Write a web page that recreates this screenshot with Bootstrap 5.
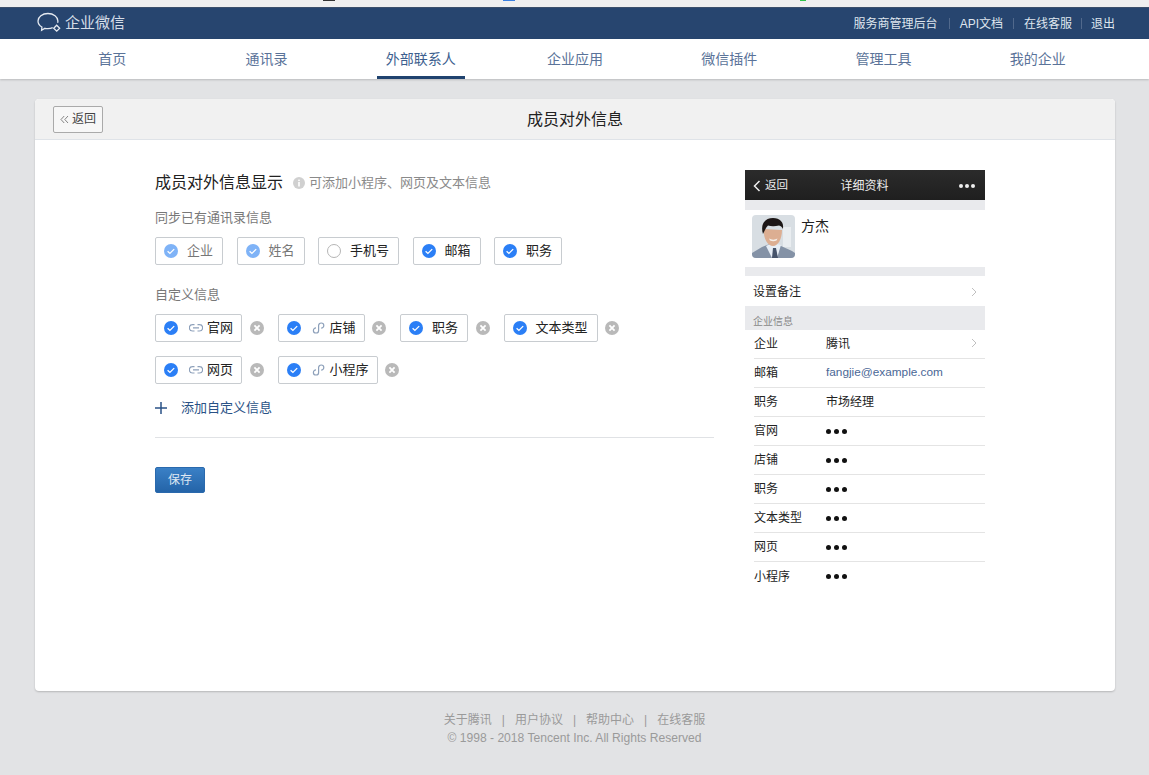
<!DOCTYPE html>
<html lang="zh-CN">
<head>
<meta charset="utf-8">
<title>成员对外信息</title>
<link href="https://cdn.jsdelivr.net/npm/bootstrap@5.3.0/dist/css/bootstrap.min.css" rel="stylesheet">
<style>
html,body{height:775px;overflow:hidden}
body{background:#e2e3e5;font-family:"Liberation Sans","Noto Sans CJK SC",sans-serif;font-size:13px;color:#222}
.browser-strip{height:8px;background:#efefef;border-bottom:1px solid #3b4f6b;position:relative}
.strip-mark{position:absolute;top:0;height:1px}
.mark-a{left:323px;width:12px;background:#333}
.mark-b{left:503px;width:12px;background:#3a7fe0}
.mark-c{left:800px;width:6px;background:#2fc24a}
.top-head{height:31px;background:#27456f;color:#dfe5ee;padding:0 34px 0 36px}
.brand-name{font-size:15px;color:#d5dde8;margin-left:3px}
.top-links a{color:#dfe5ee;text-decoration:none;font-size:12px}
.top-links i{display:block;width:1px;height:11px;background:#51698c;margin:0 10px}
.top-links i:first-of-type{margin-left:11px}
.top-links i:last-of-type{margin:0 9px}
.main-tabs{height:40px;background:#fff;padding:0 34px 0 35px;box-shadow:0 1px 2px rgba(0,0,0,.18)}
.main-tabs .nav-link{flex:1 1 0;text-align:center;padding:0;color:#5a7399;font-size:14px;line-height:41px;height:40px;position:relative}
.main-tabs .nav-link.active{color:#3d5f8f}
.main-tabs .nav-link.active::after{content:"";position:absolute;left:50%;margin-left:-44px;width:88px;height:3px;bottom:0;background:#20436f}
.panel-card{margin:20px 34px 0 35px;height:592px;border:0;border-radius:4px;box-shadow:0 1px 2px rgba(0,0,0,.2);overflow:hidden}
.panel-head{height:41px;background:#f1f1f1;border-bottom:1px solid #dfe3e8;padding:0 18px;position:relative;border-radius:4px 4px 0 0!important}
.panel-title{font-size:16px;color:#222;text-align:center;line-height:41px}
.back-btn{position:absolute;left:18px;top:7px;width:50px;height:27px;padding:0;font-size:12px;line-height:25px;border:1px solid #aaa;border-radius:2px;background:#f7f7f7;color:#444}
.back-btn svg{margin-right:3px;vertical-align:-1px}
.panel-body{padding:30px 130px 0 120px;gap:31px}
.left-col{width:559px}
.sec-title{font-size:16px;color:#222;line-height:26px}
.sec-tip{font-size:13px;color:#8a8a8a;margin-left:10px}
.sec-tip svg{margin-right:4px}
.sub-label{font-size:13px;color:#787878;line-height:18px}
.label-sync{margin-top:13px}
.label-custom{margin-top:21px}
.chip-box{height:28px;border:1px solid #c8ccd0;border-radius:2px;background:#fff;font-size:13px;color:#222;padding:0 9px 0 7px;white-space:nowrap}
.chip-box.soft{color:#777}
.chip-box.has-link{padding-right:8px}
.chip-box svg{flex:none}
.chip-box .lk{margin-left:10px;margin-right:4px}
.chip-box .tx{margin-left:8px}
.chip-box .lk + .tx{margin-left:0}
.row-a{gap:13.5px;margin-top:10px}
.row-b{margin-top:14px}
.row-c{margin-top:10px}
.tick-soft{color:#7fb3f7}
.tick-on{color:#2b7ff6}
.x-gap{margin:0 14px 0 7.5px;flex:none}
.add-link{color:#2a5286;font-size:13px;margin-top:14px;line-height:20px;text-decoration:none}
.add-link svg{margin-right:14px}
.rule-line{border-top:1px solid #e0e2e5;margin:19px 0 29px}
.save-btn{width:50px;height:26px;padding:0;font-size:12px;line-height:24px;color:#dfe8f3;border:1px solid #2a69ad;border-radius:2px;background:linear-gradient(#3a80c6,#2464a8)}
.phone{width:240px;background:#fff;flex:none}
.ph-head{height:30px;background:linear-gradient(#2b2b2b,#1f1f1f);color:#eee;padding:1px 10px 0 8px;font-size:11.5px;position:relative}
.ph-title{position:absolute;left:-1px;right:0;text-align:center;line-height:30px;font-size:12px;color:#eee}
.ph-gap{background:#e9eaed}
.gap-a{height:10px}
.gap-b{height:9px}
.ph-profile{height:57px;padding:5px 7px;gap:6px;font-size:14px;color:#222;line-height:22px}
.ph-row{height:30px;padding:1px 8px 0 8px;font-size:12px;color:#222}
.ph-sect{height:24px;background:#e9eaed;font-size:10px;color:#888;padding:9px 0 0 8px;line-height:14px}
.ph-line{height:29px;margin-left:9px;border-bottom:1px solid #e4e4e4;font-size:12px;color:#222;padding-right:8px}
.ph-line:last-child{border-bottom:0}
.ph-k{width:72px}
.ph-mail{color:#4a6796;font-size:11.8px}
.ph-up{margin-bottom:3px}
.ph-dots{font-size:0}
.ph-dots b{display:block;width:5px;height:5px;border-radius:50%;background:#111;margin-right:3px}
.ph-head .ph-dots b{width:4px;height:4px;background:#eee;margin:0 0 0 2px}
.foot-area{margin-top:20px;font-size:12px;color:#9a9a9a;line-height:18px;text-align:center}
.foot-area span{margin:0 10px}
.foot-copy{font-size:12.1px}
</style>
</head>
<body>
<svg width="0" height="0" class="position-absolute">
<defs>
<symbol id="ck" viewBox="0 0 16 16"><circle cx="8" cy="8" r="7" fill="currentColor"/><path d="M4.600 8.200l2.300 2.200 4.300-4.300" fill="none" stroke="#fff" stroke-width="1.300"/></symbol>
<symbol id="lnk" viewBox="0 0 14 10"><path d="M5.500 1.600H3.600a3 3 0 0 0 0 6.400h1.900M8.500 1.600h1.900a3 3 0 0 1 0 6.400H8.500M4 4.800h6" fill="none" stroke="#8da0ba" stroke-width="1.200"/></symbol>
<symbol id="mini" viewBox="0 0 14 14"><path d="M4 6.800A2.600 2.600 0 1 0 6.600 9.400V4.600A2.600 2.600 0 1 1 9.200 7.200" fill="none" stroke="#8da0ba" stroke-width="1.200"/></symbol>
<symbol id="cl" viewBox="0 0 14 14"><circle cx="7" cy="7" r="7" fill="#b9b9b9"/><path d="M4.400 4.400l5.200 5.200M9.600 4.400l-5.200 5.200" stroke="#fff" stroke-width="1.800"/></symbol>
<symbol id="chev" viewBox="0 0 6 10"><path d="M1 1l4 4-4 4" fill="none" stroke="#c0c0c0" stroke-width="1"/></symbol>
<filter id="soft"><feGaussianBlur stdDeviation=".5"/></filter>
</defs>
</svg>

<div class="browser-strip">
  <div class="strip-mark mark-a"></div>
  <div class="strip-mark mark-b"></div>
  <div class="strip-mark mark-c"></div>
</div>
<header class="top-head d-flex align-items-center justify-content-between">
  <div class="d-flex align-items-center">
    <svg width="26" height="23" viewBox="0 0 26 23"><path d="M21.600 10.800c.2-.6.300-1.200.300-1.900 0-4-4.400-7.400-10-7.400S2 4.900 2 8.900c0 2.500 1.500 4.700 3.900 6.100l-.3 3.300 3.400-2c.9.200 1.900.3 2.900.3 1.700 0 3.400-.3 4.800-.9" fill="none" stroke="#e6ebf2" stroke-width="1.300"/><path d="M20.700 13.200l3 3-3 3-3-3z" fill="none" stroke="#e6ebf2" stroke-width="1.300"/></svg>
    <span class="brand-name">企业微信</span>
  </div>
  <div class="top-links d-flex align-items-center">
    <a href="#">服务商管理后台</a><i></i><a href="#">API文档</a><i></i><a href="#">在线客服</a><i></i><a href="#">退出</a>
  </div>
</header>
<nav class="nav main-tabs">
  <a class="nav-link" href="#">首页</a>
  <a class="nav-link" href="#">通讯录</a>
  <a class="nav-link active" href="#">外部联系人</a>
  <a class="nav-link" href="#">企业应用</a>
  <a class="nav-link" href="#">微信插件</a>
  <a class="nav-link" href="#">管理工具</a>
  <a class="nav-link" href="#">我的企业</a>
</nav>

<main class="card panel-card">
  <div class="card-header panel-head">
    <button class="btn back-btn" type="button"><svg width="9" height="9" viewBox="0 0 9 9"><path d="M4.200 1L1 4.500 4.200 8M8 1L4.800 4.500 8 8" fill="none" stroke="#777" stroke-width=".9"/></svg>返回</button>
    <div class="panel-title">成员对外信息</div>
  </div>
  <div class="card-body panel-body d-flex align-items-start">
    <section class="left-col">
      <div class="d-flex align-items-center">
        <span class="sec-title">成员对外信息显示</span>
        <span class="sec-tip d-flex align-items-center"><svg width="12" height="12" viewBox="0 0 12 12"><circle cx="6" cy="6" r="6" fill="#d0d0d0"/><rect x="5.200" y="5" width="1.600" height="4.500" fill="#fff"/><rect x="5.200" y="2.600" width="1.600" height="1.500" fill="#fff"/></svg>可添加小程序、网页及文本信息</span>
      </div>
      <div class="sub-label label-sync">同步已有通讯录信息</div>
      <div class="d-flex row-a">
        <div class="chip-box soft d-flex align-items-center"><svg class="tick-soft" width="16" height="16"><use href="#ck"/></svg><span class="tx">企业</span></div>
        <div class="chip-box soft d-flex align-items-center"><svg class="tick-soft" width="16" height="16"><use href="#ck"/></svg><span class="tx">姓名</span></div>
        <div class="chip-box d-flex align-items-center"><svg width="16" height="16" viewBox="0 0 16 16"><circle cx="8" cy="8" r="6.500" fill="#fff" stroke="#b5b5b5"/></svg><span class="tx">手机号</span></div>
        <div class="chip-box d-flex align-items-center"><svg class="tick-on" width="16" height="16"><use href="#ck"/></svg><span class="tx">邮箱</span></div>
        <div class="chip-box d-flex align-items-center"><svg class="tick-on" width="16" height="16"><use href="#ck"/></svg><span class="tx">职务</span></div>
      </div>
      <div class="sub-label label-custom">自定义信息</div>
      <div class="d-flex align-items-center row-c">
        <div class="chip-box has-link d-flex align-items-center"><svg class="tick-on" width="16" height="16"><use href="#ck"/></svg><svg class="lk" width="14" height="10"><use href="#lnk"/></svg><span class="tx">官网</span></div>
        <svg class="x-gap" width="14" height="14"><use href="#cl"/></svg>
        <div class="chip-box has-link d-flex align-items-center"><svg class="tick-on" width="16" height="16"><use href="#ck"/></svg><svg class="lk" width="14" height="14"><use href="#mini"/></svg><span class="tx">店铺</span></div>
        <svg class="x-gap" width="14" height="14"><use href="#cl"/></svg>
        <div class="chip-box d-flex align-items-center"><svg class="tick-on" width="16" height="16"><use href="#ck"/></svg><span class="tx">职务</span></div>
        <svg class="x-gap" width="14" height="14"><use href="#cl"/></svg>
        <div class="chip-box d-flex align-items-center"><svg class="tick-on" width="16" height="16"><use href="#ck"/></svg><span class="tx">文本类型</span></div>
        <svg class="x-gap" width="14" height="14"><use href="#cl"/></svg>
      </div>
      <div class="d-flex align-items-center row-b">
        <div class="chip-box has-link d-flex align-items-center"><svg class="tick-on" width="16" height="16"><use href="#ck"/></svg><svg class="lk" width="14" height="10"><use href="#lnk"/></svg><span class="tx">网页</span></div>
        <svg class="x-gap" width="14" height="14"><use href="#cl"/></svg>
        <div class="chip-box has-link d-flex align-items-center"><svg class="tick-on" width="16" height="16"><use href="#ck"/></svg><svg class="lk" width="14" height="14"><use href="#mini"/></svg><span class="tx">小程序</span></div>
        <svg class="x-gap" width="14" height="14"><use href="#cl"/></svg>
      </div>
      <a href="#" class="add-link d-flex align-items-center"><svg width="12" height="12" viewBox="0 0 12 12"><path d="M6 0v12M0 6h12" stroke="#2a5286" stroke-width="1.500"/></svg>添加自定义信息</a>
      <div class="rule-line"></div>
      <button class="btn save-btn" type="button">保存</button>
    </section>

    <aside class="phone">
      <div class="ph-head d-flex align-items-center justify-content-between">
        <span class="ph-title">详细资料</span>
        <span class="d-flex align-items-center"><svg width="8" height="12" viewBox="0 0 8 12" class="me-1"><path d="M6.500 1L1.500 6l5 5" fill="none" stroke="#eee" stroke-width="1.500"/></svg>返回</span>
        <span class="ph-dots d-flex"><b></b><b></b><b></b></span>
      </div>
      <div class="ph-gap gap-a"></div>
      <div class="ph-profile d-flex">
        <svg width="43" height="43" viewBox="0 0 43 43" class="rounded-1 flex-shrink-0"><rect width="43" height="43" fill="#d8dee3"/><g filter="url(#soft)"><rect x="31" y="12" width="8" height="20" fill="#e9edf0"/><path d="M0 43v-5l10-6 10-4 9 3 11 5 3 2v5z" fill="#8492a6"/><path d="M14 31l6-3 9 2-4 13h-5z" fill="#e6edf5"/><path d="M21 33h3l2 10h-6z" fill="#45526a"/><path d="M12 14c-1 10 4 17 9 17s9-7 9-16z" fill="#dcae92"/><path d="M17 23.500c2.500 1.500 6 1.500 8.500 0l-1 2c-2 1-4.500 1-6.500 0z" fill="#f5efe9"/><path d="M11 19C8 9 13 3 21 3c7 0 11 4 10 11-1-2-2-3-4-3.500-4 1-8 1-11 0-2 2-3 4.500-5 8.500z" fill="#1c1816"/></g></svg>
        <span>方杰</span>
      </div>
      <div class="ph-gap gap-b"></div>
      <div class="ph-row d-flex align-items-center justify-content-between"><span>设置备注</span><svg width="6" height="10"><use href="#chev"/></svg></div>
      <div class="ph-sect">企业信息</div>
      <div class="ph-line d-flex align-items-center"><span class="ph-k">企业</span><span class="flex-grow-1">腾讯</span><svg class="ph-up" width="6" height="10"><use href="#chev"/></svg></div>
      <div class="ph-line d-flex align-items-center"><span class="ph-k">邮箱</span><span class="ph-mail">fangjie@example.com</span></div>
      <div class="ph-line d-flex align-items-center"><span class="ph-k">职务</span><span>市场经理</span></div>
      <div class="ph-line d-flex align-items-center"><span class="ph-k">官网</span><span class="ph-dots d-flex"><b></b><b></b><b></b></span></div>
      <div class="ph-line d-flex align-items-center"><span class="ph-k">店铺</span><span class="ph-dots d-flex"><b></b><b></b><b></b></span></div>
      <div class="ph-line d-flex align-items-center"><span class="ph-k">职务</span><span class="ph-dots d-flex"><b></b><b></b><b></b></span></div>
      <div class="ph-line d-flex align-items-center"><span class="ph-k">文本类型</span><span class="ph-dots d-flex"><b></b><b></b><b></b></span></div>
      <div class="ph-line d-flex align-items-center"><span class="ph-k">网页</span><span class="ph-dots d-flex"><b></b><b></b><b></b></span></div>
      <div class="ph-line d-flex align-items-center"><span class="ph-k">小程序</span><span class="ph-dots d-flex"><b></b><b></b><b></b></span></div>
    </aside>
  </div>
</main>

<footer class="foot-area">
  <div>关于腾讯<span>|</span>用户协议<span>|</span>帮助中心<span>|</span>在线客服</div>
  <div class="foot-copy">© 1998 - 2018 Tencent Inc. All Rights Reserved</div>
</footer>
<script src="https://cdn.jsdelivr.net/npm/bootstrap@5.3.0/dist/js/bootstrap.bundle.min.js"></script>
</body>
</html>
